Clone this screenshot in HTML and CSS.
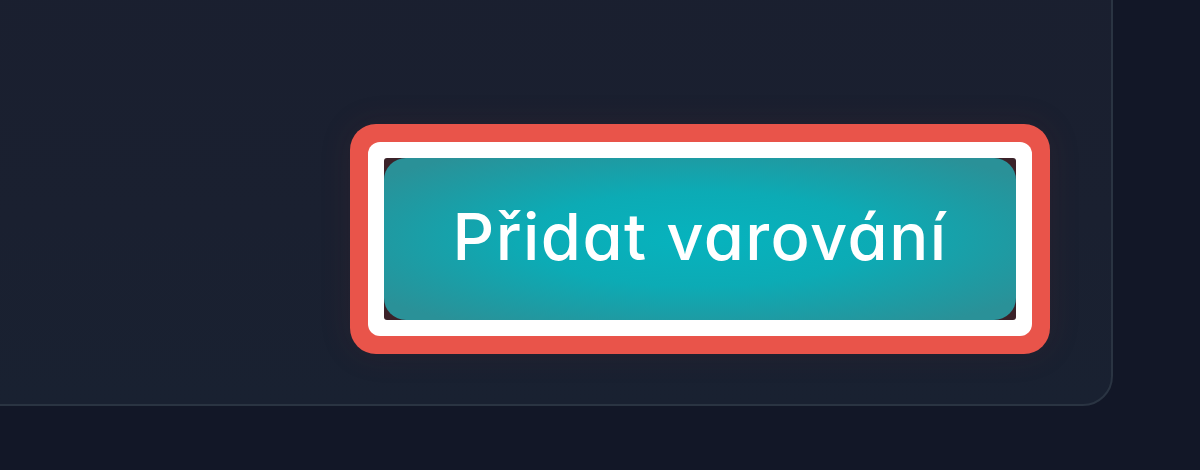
FILE: index.html
```html
<!DOCTYPE html>
<html lang="cs">
<head>
<meta charset="utf-8">
<title>Přidat varování</title>
<link rel="stylesheet" href="styles.css">
</head>
<body>
<div class="page">
  <section class="card">
    <div class="ring-red">
      <div class="ring-white">
        <div class="slot">
          <button class="btn" type="button">Přidat varování</button>
        </div>
      </div>
    </div>
  </section>
</div>
</body>
</html>
```

FILE: styles.css
```css
html, body {
  margin: 0;
  padding: 0;
}
body {
  width: 1200px;
  height: 470px;
  overflow: hidden;
  background: #121727;
}
.page {
  display: flex;
}
.card {
  box-sizing: border-box;
  margin-top: -60px;
  margin-left: -40px;
  width: 1153px;
  height: 466px;
  border: 2px solid #2a3442;
  border-radius: 30px;
  background: linear-gradient(180deg, #1a1f2f 0%, #1a2030 60%, #192131 100%);
  display: flex;
  justify-content: flex-end;
  align-items: flex-start;
  padding-top: 182px;
  padding-right: 61px;
}
.ring-red {
  padding: 18px;
  border-radius: 26px;
  background: #e9544a;
  box-shadow: 0 0 30px 2px rgba(110, 40, 45, 0.14);
}
.ring-white {
  padding: 16px;
  border-radius: 12px;
  background: #ffffff;
}
.slot {
  display: flex;
  background: #3b2229;
  border-radius: 3px;
}
.btn {
  width: 632px;
  height: 162px;
  border: 0;
  margin: 0;
  padding: 0 0 6px 0;
  border-radius: 22px;
  background: radial-gradient(ellipse 62% 65% at 50% 50%, #06b3be 0%, #0cabb5 45%, #1f9aa2 80%, #2a9198 100%);
  color: #ffffff;
  font-family: Inter, "Noto Sans", sans-serif;
  font-feature-settings: "cv11" 1;
  font-size: 65px;
  font-weight: 500;
  letter-spacing: 1.4px;
  cursor: pointer;
}
```
